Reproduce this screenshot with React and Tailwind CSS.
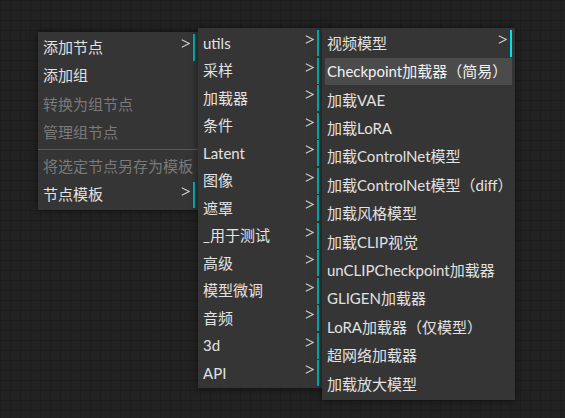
import React from 'react';

const font = { fontFamily: '"Lato", "Noto Sans CJK SC", sans-serif' };

const menu1 = [
  { label: '添加节点', sub: true },
  { label: '添加组' },
  { label: '转换为组节点', disabled: true },
  { label: '管理组节点', disabled: true },
  { separator: true },
  { label: '将选定节点另存为模板', disabled: true },
  { label: '节点模板', sub: true },
];

const menu2 = [
  'utils', '采样', '加载器', '条件', 'Latent', '图像', '遮罩',
  '_用于测试', '高级', '模型微调', '音频', '3d', 'API',
].map((label) => ({ label, sub: true }));

const menu3 = [
  { label: '视频模型', sub: true },
  { label: 'Checkpoint加载器（简易）', active: true },
  { label: '加载VAE' },
  { label: '加载LoRA' },
  { label: '加载ControlNet模型' },
  { label: '加载ControlNet模型（diff）' },
  { label: '加载风格模型' },
  { label: '加载CLIP视觉' },
  { label: 'unCLIPCheckpoint加载器' },
  { label: 'GLIGEN加载器' },
  { label: 'LoRA加载器（仅模型）' },
  { label: '超网络加载器' },
  { label: '加载放大模型' },
];

function Entry({ item, rowH, barColor }) {
  if (item.separator) {
    return (
      <div className="-mx-[3px] h-[4px] flex items-center">
        <div className="w-full h-px bg-[#5a5a5a]" />
      </div>
    );
  }
  return (
    <div
      className={`relative flex items-center pl-[2px] whitespace-nowrap text-[15px] leading-none ${
        item.disabled ? 'text-[#7a7a7a]' : 'text-[#e2e2e2]'
      } ${item.active ? 'bg-[#4b4b4b] text-[#f2f2f2]' : ''} ${item.sub ? 'border-r-2' : ''}`}
      style={{ height: rowH, borderColor: item.sub ? barColor : undefined }}
    >
      {item.label}
      {item.sub && (
        <svg
          className="absolute right-[3px] top-[5px]"
          width="9"
          height="9"
          viewBox="0 0 9 9"
          fill="none"
          stroke="#cfcfcf"
          strokeWidth="1.1"
        >
          <polyline points="0.8,0.8 8.2,4.5 0.8,8.2" />
        </svg>
      )}
    </div>
  );
}

function Menu({ items, className, rowH, gap, barColor }) {
  return (
    <div
      className={`absolute bg-[#353535] px-[3px] py-[2px] flex flex-col shadow-[0_0_8px_rgba(0,0,0,0.55)] ${className}`}
      style={{ gap }}
    >
      {items.map((item, i) => (
        <Entry key={i} item={item} rowH={rowH} barColor={barColor} />
      ))}
    </div>
  );
}

export default function App() {
  return (
    <div
      className="relative w-[565px] h-[418px] overflow-hidden bg-[#222222] bg-[linear-gradient(#1d1d1d_1px,transparent_1px),linear-gradient(90deg,#1d1d1d_1px,transparent_1px)] bg-[size:10px_10px]"
      style={font}
    >
      <Menu
        items={menu1}
        className="left-[38px] top-[32px] w-[160px]"
        rowH="26.8px"
        gap="1.6px"
        barColor="#00b4bc"
      />
      <Menu
        items={menu2}
        className="left-[198px] top-[28px] w-[124px]"
        rowH="26px"
        gap="1.5px"
        barColor="#00b4bc"
      />
      <Menu
        items={menu3}
        className="left-[322px] top-[28px] w-[193px] pb-[3px]"
        rowH="26.8px"
        gap="1.6px"
        barColor="#00e1ec"
      />
    </div>
  );
}
